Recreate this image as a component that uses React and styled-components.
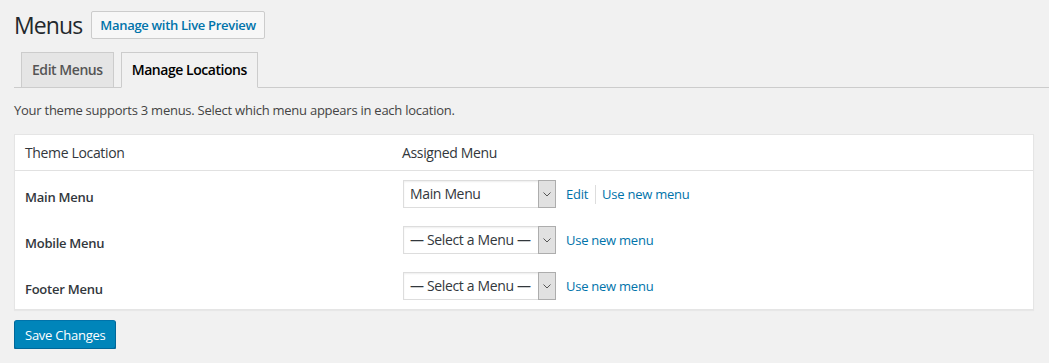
import styled, { createGlobalStyle } from "styled-components";

const GlobalStyle = createGlobalStyle`
  html, body {
    margin: 0;
    padding: 0;
    background: #f1f1f1;
  }
  body {
    font-family: "Open Sans", "Noto Sans", sans-serif;
    font-size: 13px;
    color: #444;
    letter-spacing: -0.25px;
  }
`;

const Wrap = styled.div`
  padding: 0 15px 0 14px;
`;

const TitleRow = styled.div`
  display: flex;
  align-items: center;
  gap: 9px;
  padding-top: 11px;
  height: 28px;
`;

const Title = styled.h1`
  margin: 0;
  font-size: 23px;
  font-weight: 400;
  line-height: 28px;
  color: #23282d;
  letter-spacing: -0.9px;
`;

const TitleButton = styled.a`
  display: inline-flex;
  align-items: center;
  box-sizing: border-box;
  height: 28px;
  padding: 0 8px;
  border: 1px solid #ccc;
  border-radius: 2px;
  background: #f7f7f7;
  color: #0073aa;
  font-weight: 600;
  font-size: 13px;
  letter-spacing: -0.3px;
  text-decoration: none;
`;

const Tabs = styled.nav`
  display: flex;
  align-items: flex-end;
  gap: 7px;
  margin: 13px -15px 0 0;
  padding-left: 7px;
  border-bottom: 1px solid #ccc;
`;

const Tab = styled.a`
  display: block;
  box-sizing: border-box;
  height: 36px;
  margin-bottom: -1px;
  padding: 0 10px;
  border: 1px solid #ccc;
  border-bottom: 1px solid ${(p) => (p.$active ? "#f1f1f1" : "#ccc")};
  background: ${(p) => (p.$active ? "#f1f1f1" : "#e5e5e5")};
  color: ${(p) => (p.$active ? "#000" : "#555")};
  font-size: 14px;
  font-weight: 600;
  letter-spacing: -0.45px;
  line-height: 34px;
  text-decoration: none;
`;

const Intro = styled.p`
  margin: 12px 0 14px;
  line-height: 20px;
  color: #444;
`;

const Table = styled.div`
  background: #fff;
  border: 1px solid #e5e5e5;
  box-shadow: 0 1px 1px rgba(0, 0, 0, 0.04);
`;

const Row = styled.div`
  display: grid;
  grid-template-columns: 377px 1fr;
  height: ${(p) => (p.$head ? "35px" : "46px")};
  border-bottom: ${(p) => (p.$head ? "1px solid #e1e1e1" : "none")};
`;

const HeadCell = styled.div`
  padding: 0 10px;
  line-height: 35px;
  font-size: 14px;
  color: #32373c;
  letter-spacing: -0.35px;
`;

const LabelCell = styled.div`
  padding: 16px 10px 0;
  line-height: 20px;
  font-weight: 600;
  color: #32373c;
`;

const MenuCell = styled.div`
  display: flex;
  align-items: center;
  gap: 10px;
  padding: 9px 10px 0 11px;
  height: 28px;
`;

const Select = styled.div`
  display: flex;
  box-sizing: border-box;
  width: 153px;
  height: 28px;
  border: 1px solid #ddd;
  background: #fff;
  box-shadow: inset 0 1px 2px rgba(0, 0, 0, 0.07);
  color: #32373c;
  font-size: 14px;
  letter-spacing: -0.35px;
`;

const SelectText = styled.span`
  flex: 1;
  padding-left: 6px;
  line-height: 26px;
  white-space: nowrap;
  overflow: hidden;
`;

const Arrow = styled.span`
  display: flex;
  align-items: center;
  justify-content: center;
  box-sizing: border-box;
  width: 18px;
  margin: -1px -1px -1px 0;
  border: 1px solid #adadad;
  background: #e1e1e1;
`;

const Links = styled.div`
  display: flex;
  align-items: center;
`;

const MenuLink = styled.a`
  color: #0073aa;
  text-decoration: none;
  font-size: 13px;
`;

const Sep = styled.span`
  display: inline-block;
  width: 1px;
  height: 19px;
  margin: 0 6px 0 7px;
  background: #ddd;
`;

const SaveButton = styled.button`
  margin-top: 10px;
  box-sizing: border-box;
  height: 29px;
  padding: 0 10px;
  border: 1px solid;
  border-color: #0073aa #006799 #006799;
  border-radius: 3px;
  background: #0085ba;
  box-shadow: 0 1px 0 #006799;
  color: #fff;
  font-family: inherit;
  font-size: 13px;
  letter-spacing: -0.25px;
  cursor: pointer;
`;

function Chevron() {
  return (
    <svg width="8" height="5" viewBox="0 0 8 5">
      <path d="M0.5 0.5 L4 4 L7.5 0.5" fill="none" stroke="#555" strokeWidth="1" />
    </svg>
  );
}

const locations = [
  { name: "Main Menu", value: "Main Menu", edit: true },
  { name: "Mobile Menu", value: "— Select a Menu —" },
  { name: "Footer Menu", value: "— Select a Menu —" },
];

export default function App() {
  return (
    <Wrap>
      <GlobalStyle />
      <TitleRow>
        <Title>Menus</Title>
        <TitleButton href="#">Manage with Live Preview</TitleButton>
      </TitleRow>
      <Tabs>
        <Tab href="#">Edit Menus</Tab>
        <Tab href="#" $active>
          Manage Locations
        </Tab>
      </Tabs>
      <Intro>Your theme supports 3 menus. Select which menu appears in each location.</Intro>
      <Table>
        <Row $head>
          <HeadCell>Theme Location</HeadCell>
          <HeadCell>Assigned Menu</HeadCell>
        </Row>
        {locations.map((loc) => (
          <Row key={loc.name}>
            <LabelCell>{loc.name}</LabelCell>
            <MenuCell>
              <Select>
                <SelectText>{loc.value}</SelectText>
                <Arrow>
                  <Chevron />
                </Arrow>
              </Select>
              <Links>
                {loc.edit && (
                  <>
                    <MenuLink href="#">Edit</MenuLink>
                    <Sep />
                  </>
                )}
                <MenuLink href="#">Use new menu</MenuLink>
              </Links>
            </MenuCell>
          </Row>
        ))}
      </Table>
      <SaveButton>Save Changes</SaveButton>
    </Wrap>
  );
}
